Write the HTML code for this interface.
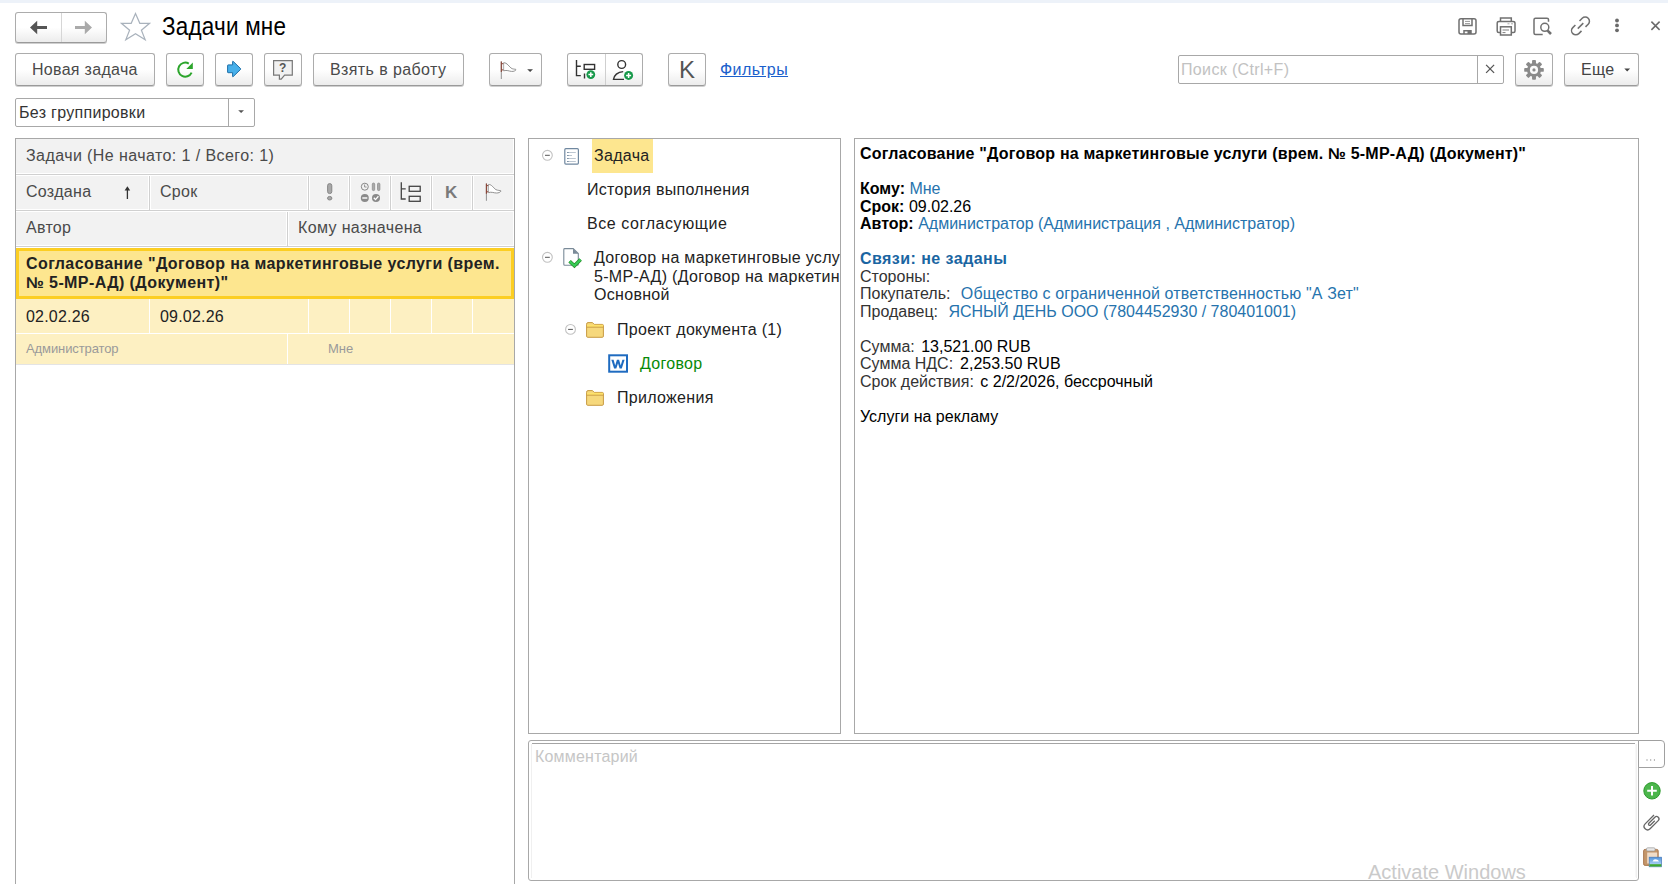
<!DOCTYPE html>
<html><head><meta charset="utf-8">
<style>
*{box-sizing:border-box;margin:0;padding:0}
html,body{width:1668px;height:884px;overflow:hidden;background:#fff;font-family:"Liberation Sans",sans-serif;font-size:16px;color:#333}
.a{position:absolute}
.t{position:absolute;white-space:nowrap;line-height:16px;letter-spacing:0.3px}
.btn{position:absolute;border:1px solid #acacac;border-bottom-color:#9a9a9a;border-radius:3px;background:linear-gradient(#fff 50%,#ececec);box-shadow:0 1px 0 #cfcfcf}
.vs{position:absolute;width:1px;background:#d2d2d2}
.hc{position:absolute;background:#f2f2f2}
.rt{position:absolute;white-space:nowrap;line-height:16px;color:#000;letter-spacing:0}
svg{position:absolute;left:0;top:0}
</style></head><body>
<div class="a" style="left:0;top:0;width:1668px;height:3px;background:#edf2f9"></div>

<!-- nav buttons -->
<div class="btn" style="left:15px;top:12px;width:92px;height:31px"></div>
<div class="vs" style="left:61px;top:13px;height:29px;background:#d6d6d6"></div>

<!-- title -->
<div class="t" style="left:162px;top:16px;font-size:22.5px;line-height:22px;color:#000;letter-spacing:0.2px;transform:scaleY(1.12);transform-origin:0 10.4px">Задачи мне</div>

<!-- toolbar row -->
<div class="btn" style="left:15px;top:53px;width:140px;height:33px"></div>
<div class="t" style="left:32px;top:62px;color:#4a4a4a">Новая задача</div>
<div class="btn" style="left:166px;top:53px;width:38px;height:33px"></div>
<div class="btn" style="left:215px;top:53px;width:38px;height:33px"></div>
<div class="btn" style="left:264px;top:53px;width:38px;height:33px"></div>
<div class="btn" style="left:313px;top:53px;width:151px;height:33px"></div>
<div class="t" style="left:330px;top:62px;color:#4a4a4a;letter-spacing:0.4px">Взять в работу</div>
<div class="btn" style="left:489px;top:53px;width:53px;height:33px"></div>
<div class="btn" style="left:567px;top:53px;width:76px;height:33px"></div>
<div class="vs" style="left:605px;top:54px;height:31px;background:#cfcfcf"></div>
<div class="btn" style="left:668px;top:53px;width:38px;height:33px"></div>
<div class="t" style="left:679px;top:58px;font-size:24px;line-height:24px;color:#555;letter-spacing:0">K</div>
<div class="t" style="left:720px;top:62px;color:#1a5fcc;text-decoration:underline;letter-spacing:0.4px">Фильтры</div>

<!-- search -->
<div class="a" style="left:1178px;top:55px;width:326px;height:29px;border:1px solid #a8a8a8;border-radius:2px;background:#fff"></div>
<div class="vs" style="left:1477px;top:56px;height:27px;background:#a8a8a8"></div>
<div class="t" style="left:1181px;top:62px;color:#c2c2c2;letter-spacing:0.35px">Поиск (Ctrl+F)</div>
<div class="btn" style="left:1515px;top:53px;width:38px;height:33px"></div>
<div class="btn" style="left:1564px;top:53px;width:75px;height:33px"></div>
<div class="t" style="left:1581px;top:62px;color:#444">Еще</div>

<!-- grouping select -->
<div class="a" style="left:15px;top:98px;width:240px;height:29px;border:1px solid #a8a8a8;border-radius:2px;background:#fff"></div>
<div class="vs" style="left:228px;top:99px;height:27px;background:#a8a8a8"></div>
<div class="t" style="left:19px;top:105px;color:#333">Без группировки</div>

<!-- left panel -->
<div class="a" style="left:15px;top:138px;width:500px;height:760px;border:1px solid #a8a8a8;background:#fff"></div>
<div class="a" style="left:16px;top:139px;width:498px;height:109px;background:#fff"></div>
<div class="hc" style="left:16px;top:139px;width:497px;height:34px"></div>
<div class="a" style="left:16px;top:174px;width:498px;height:1px;background:#d0d0d0"></div>
<div class="t" style="left:26px;top:148px;color:#4a4a4a;letter-spacing:0.42px">Задачи (Не начато: 1 / Всего: 1)</div>
<div class="hc" style="left:16px;top:176px;width:132px;height:33px"></div>
<div class="hc" style="left:151px;top:176px;width:156px;height:33px"></div>
<div class="hc" style="left:310px;top:176px;width:38px;height:33px"></div>
<div class="hc" style="left:351px;top:176px;width:38px;height:33px"></div>
<div class="hc" style="left:392px;top:176px;width:38px;height:33px"></div>
<div class="hc" style="left:433px;top:176px;width:38px;height:33px"></div>
<div class="hc" style="left:474px;top:176px;width:39px;height:33px"></div>
<div class="vs" style="left:149px;top:176px;height:34px;background:#d0d0d0"></div>
<div class="vs" style="left:308px;top:176px;height:34px;background:#d0d0d0"></div>
<div class="vs" style="left:349px;top:176px;height:34px;background:#d0d0d0"></div>
<div class="vs" style="left:390px;top:176px;height:34px;background:#d0d0d0"></div>
<div class="vs" style="left:431px;top:176px;height:34px;background:#d0d0d0"></div>
<div class="vs" style="left:472px;top:176px;height:34px;background:#d0d0d0"></div>
<div class="a" style="left:16px;top:210px;width:498px;height:1px;background:#d0d0d0"></div>
<div class="t" style="left:26px;top:184px;color:#4a4a4a">Создана</div>
<div class="t" style="left:160px;top:184px;color:#4a4a4a">Срок</div>
<div class="t" style="left:445px;top:184px;font-weight:bold;font-size:17px;line-height:17px;color:#7a7a7a;letter-spacing:0">K</div>
<div class="hc" style="left:16px;top:212px;width:270px;height:33px"></div>
<div class="hc" style="left:289px;top:212px;width:224px;height:33px"></div>
<div class="vs" style="left:287px;top:212px;height:34px;background:#d0d0d0"></div>
<div class="a" style="left:16px;top:246px;width:498px;height:1px;background:#d0d0d0"></div>
<div class="t" style="left:26px;top:220px;color:#4a4a4a">Автор</div>
<div class="t" style="left:298px;top:220px;color:#4a4a4a;letter-spacing:0.36px">Кому назначена</div>

<!-- selected row -->
<div class="a" style="left:16px;top:248px;width:498px;height:51px;background:#fde68f;border:3px solid #fcce22"></div>
<div class="t" style="left:26px;top:254px;font-weight:bold;color:#222;line-height:19px;letter-spacing:0.4px">Согласование "Договор на маркетинговые услуги (врем.<br>№ 5-МР-АД) (Документ)"</div>
<!-- dates row -->
<div class="a" style="left:16px;top:299px;width:498px;height:34px;background:#fdf0c2"></div>
<div class="vs" style="left:149px;top:299px;height:34px;background:#fff"></div>
<div class="vs" style="left:308px;top:299px;height:34px;background:#fff"></div>
<div class="vs" style="left:349px;top:299px;height:34px;background:#fff"></div>
<div class="vs" style="left:390px;top:299px;height:34px;background:#fff"></div>
<div class="vs" style="left:431px;top:299px;height:34px;background:#fff"></div>
<div class="vs" style="left:472px;top:299px;height:34px;background:#fff"></div>
<div class="t" style="left:26px;top:309px;color:#222;letter-spacing:0.2px">02.02.26</div>
<div class="t" style="left:160px;top:309px;color:#222;letter-spacing:0.2px">09.02.26</div>
<!-- author row -->
<div class="a" style="left:16px;top:333px;width:498px;height:1px;background:#fff"></div>
<div class="a" style="left:16px;top:334px;width:498px;height:30px;background:#fdf0c2"></div>
<div class="vs" style="left:287px;top:334px;height:30px;background:#fff"></div>
<div class="a" style="left:16px;top:364px;width:498px;height:1px;background:#e4e4e4"></div>
<div class="t" style="left:26px;top:342px;font-size:13px;line-height:13px;color:#9a9a9a;letter-spacing:-0.1px">Администратор</div>
<div class="t" style="left:328px;top:342px;font-size:13px;line-height:13px;color:#9a9a9a;letter-spacing:0">Мне</div>

<!-- middle panel -->
<div class="a" style="left:528px;top:138px;width:313px;height:596px;border:1px solid #a8a8a8;background:#fff;overflow:hidden">
  <div class="a" style="left:63px;top:0;width:61px;height:34px;background:#fde68f"></div>
</div>
<div class="a" style="left:529px;top:139px;width:311px;height:594px;overflow:hidden">
  <div class="t" style="left:65px;top:9px;color:#222">Задача</div>
  <div class="t" style="left:58px;top:43px;color:#222">История выполнения</div>
  <div class="t" style="left:58px;top:77px;color:#222;letter-spacing:0.58px">Все согласующие</div>
  <div class="t" style="left:65px;top:110px;color:#222;line-height:18.5px">Договор на маркетинговые услуги (врем. №<br>5-МР-АД) (Договор на маркетинговые услуги<br>Основной</div>
  <div class="t" style="left:88px;top:183px;color:#222">Проект документа (1)</div>
  <div class="t" style="left:111px;top:217px;color:#088a08">Договор</div>
  <div class="t" style="left:88px;top:251px;color:#222">Приложения</div>
</div>

<!-- right panel -->
<div class="a" style="left:854px;top:138px;width:785px;height:596px;border:1px solid #a8a8a8;background:#fff"></div>
<div class="rt" style="left:860px;top:146px;font-weight:bold;letter-spacing:0.2px">Согласование "Договор на маркетинговые услуги (врем. № 5-МР-АД) (Документ)"</div>
<div class="rt" style="left:860px;top:181px"><b>Кому:</b> <span style="color:#2673ad">Мне</span></div>
<div class="rt" style="left:860px;top:199px"><b>Срок:</b> 09.02.26</div>
<div class="rt" style="left:860px;top:216px"><b>Автор:</b> <span style="color:#2673ad">Администратор (Администрация , Администратор)</span></div>
<div class="rt" style="left:860px;top:251px;font-weight:bold;color:#1a65a2;letter-spacing:0.45px">Связи: не заданы</div>
<div class="rt" style="left:860px;top:269px;color:#333">Стороны:</div>
<div class="rt" style="left:860px;top:286px;color:#333">Покупатель:&nbsp; <span style="color:#2673ad;margin-left:1.5px;letter-spacing:0.14px">Общество с ограниченной ответственностью "А Зет"</span></div>
<div class="rt" style="left:860px;top:304px;color:#333">Продавец:&nbsp; <span style="color:#2673ad;margin-left:1.5px">ЯСНЫЙ ДЕНЬ ООО (7804452930 / 780401001)</span></div>
<div class="rt" style="left:860px;top:339px;color:#333">Сумма: <span style="color:#000;margin-left:2px">13,521.00 RUB</span></div>
<div class="rt" style="left:860px;top:356px;color:#333">Сумма НДС: <span style="color:#000;margin-left:2.5px">2,253.50 RUB</span></div>
<div class="rt" style="left:860px;top:374px;color:#333">Срок действия: <span style="color:#000;margin-left:2px">с 2/2/2026, бессрочный</span></div>
<div class="rt" style="left:860px;top:409px">Услуги на рекламу</div>

<!-- comment -->
<div class="a" style="left:528px;top:740px;width:1111px;height:141px;border:1px solid #a8a8a8;border-radius:3px 0 3px 3px;background:#fff"></div>
<div class="t" style="left:535px;top:749px;color:#c6c6c6;letter-spacing:0.2px">Комментарий</div>
<div class="a" style="left:532px;top:743px;width:1103px;height:1px;background:#a4a4a4"></div>
<div class="a" style="left:531px;top:744px;width:1px;height:134px;background:#f0f0f0"></div>
<div class="a" style="left:1636px;top:744px;width:1px;height:134px;background:#f0f0f0"></div>
<div class="a" style="left:1638px;top:740px;width:27px;height:28px;border:1px solid #a0a0a0;border-radius:0 4px 4px 0;background:#fff"></div>
<div class="t" style="left:1368px;top:862px;font-size:20px;line-height:20px;color:#cacaca;letter-spacing:0">Activate Windows</div>

<!--ICONS--><svg width="1668" height="884" viewBox="0 0 1668 884">
<!-- nav arrows -->
<path d="M30,27.5 L37.2,20.8 L37.2,26 L47,26 L47,29 L37.2,29 L37.2,34.2 Z" fill="#555"/>
<path d="M92,27.5 L84.8,20.8 L84.8,26 L75,26 L75,29 L84.8,29 L84.8,34.2 Z" fill="#aaa"/>
<!-- star -->
<path d="M135.5,13.6 L139.8,23.3 L149.6,23.3 L141.4,30.3 L145.2,39.8 L135.5,33.8 L125.8,39.8 L129.6,30.3 L121.4,23.3 L131.2,23.3 Z" fill="none" stroke="#a9b2bc" stroke-width="1.2" stroke-linejoin="miter"/>
<!-- save -->
<g fill="none" stroke="#707070" stroke-width="1.5">
<rect x="1459" y="18.8" width="17" height="15.3" rx="2"/>
<path d="M1463,19 V25.5 H1472 V19"/>
<path d="M1464,34 V30.8 H1471 V34"/>
</g>
<path d="M1465,21.4 H1470 M1465,23.6 H1470" stroke="#999" stroke-width="1"/>
<rect x="1467.5" y="31" width="3.5" height="3" fill="#707070"/>
<!-- print -->
<g fill="none" stroke="#707070" stroke-width="1.5">
<path d="M1500.5,21 V17.9 H1511.3 V21"/>
<path d="M1500.5,32.5 H1498.8 Q1497.2,32.5 1497.2,31 V23.2 Q1497.2,21.5 1499,21.5 H1513 Q1515,21.5 1515,23.2 V31 Q1515,32.5 1513.5,32.5 H1511.3"/>
<rect x="1500.5" y="26.8" width="10.8" height="8.2"/>
</g>
<path d="M1502.5,30 H1509 M1502.5,32.6 H1505.5" stroke="#808080" stroke-width="1"/>
<path d="M1507.5,23.8 H1509.5 M1511,23.8 H1513" stroke="#aaa" stroke-width="1"/>
<!-- preview -->
<g fill="none" stroke="#707070" stroke-width="1.5">
<path d="M1548.5,21.7 V19.5 Q1548.5,18.2 1547,18.2 H1535.5 Q1534,18.2 1534,19.8 V33 Q1534,34.5 1535.5,34.5 H1542.7"/>
<circle cx="1544.8" cy="27.3" r="4"/>
</g>
<path d="M1547.6,30.6 L1551,34" stroke="#707070" stroke-width="2.6"/>
<!-- link -->
<g fill="none" stroke="#707070" stroke-width="1.5" stroke-linecap="butt">
<path d="M1579.5,21 L1582.2,18.2 A4.24,4.24 0 0 1 1588.2,24.2 L1585.5,26.9"/>
<path d="M1575.4,25 L1572.8,27.6 A4.24,4.24 0 0 0 1578.8,33.6 L1581.5,30.9"/>
<path d="M1577.8,28.6 L1583.3,23.1"/>
</g>
<!-- more -->
<g fill="#6a6a6a"><circle cx="1617" cy="20.5" r="1.9"/><circle cx="1617" cy="25.4" r="1.9"/><circle cx="1617" cy="30.3" r="1.9"/></g>
<!-- close -->
<path d="M1651.4,21.6 L1659.6,29.9 M1659.6,21.6 L1651.4,29.9" stroke="#6a6a6a" stroke-width="1.5"/>

<!-- refresh -->
<path d="M191.6,72.6 A7,7 0 1 1 188.8,63.6" fill="none" stroke="#2ca52c" stroke-width="2"/>
<path d="M192.8,62.4 V68.9 H186.3 Z" fill="#2ca52c"/>
<!-- blue arrow -->
<path d="M227.6,65.4 Q227.6,64.9 228.1,64.9 H232.6 V61.6 Q232.6,60.9 233.2,61.4 L240.6,68.6 Q241,69 240.6,69.4 L233.2,76.6 Q232.6,77.1 232.6,76.4 V72.7 H228.1 Q227.6,72.7 227.6,72.2 Z" fill="#48b0ea" stroke="#1e6fa8" stroke-width="1"/>
<!-- help -->
<path d="M273.6,60.6 H292.3 V75.1 H284.6 L281.2,79.2 H279.4 V75.1 H273.6 Z" fill="#f1f1f1" stroke="#777" stroke-width="1.2"/>
<text x="282.6" y="71.6" font-family="Liberation Sans" font-size="12" font-weight="bold" fill="#555" text-anchor="middle">?</text>
<!-- flag toolbar -->
<path d="M501.3,61.5 V79" stroke="#8f8f8f" stroke-width="1"/>
<path d="M501.3,61.5 V72" stroke="#8a4436" stroke-width="1.1"/>
<path d="M503.6,62.8 C507,62.2 509.5,67.5 512,68.6 C514,69.4 516.5,69.1 516,69.8 C515,70.9 513.8,71.6 511.5,71.4 C509,71.2 507,69.8 503.6,70.8 Z" fill="#fff" stroke="#858585" stroke-width="0.9"/>
<path d="M503.3,63 V70.6" stroke="#c4c4c4" stroke-width="0.9"/>
<path d="M501.6,63.7 H503.4 M501.6,69.9 H503.4" stroke="#8a4436" stroke-width="1"/>
<path d="M527.2,69.2 H533 L530.1,72 Z" fill="#444"/>
<!-- tree add -->
<g fill="none" stroke="#333" stroke-width="1.4">
<path d="M576.5,60 V75.6 H580.8 M576.5,66.3 H580.8"/>
<rect x="584.2" y="64.5" width="10.4" height="4.8"/>
<path d="M584.5,73.5 V78.5"/>
</g>
<circle cx="590.8" cy="74.6" r="4.4" fill="#17994a"/>
<path d="M590.8,72.2 V77 M588.4,74.6 H593.2" stroke="#fff" stroke-width="1.5"/>
<!-- person add -->
<circle cx="621.7" cy="64.5" r="3.9" fill="none" stroke="#333" stroke-width="1.4"/>
<path d="M623.2,71.6 C617.5,71.8 614,75.5 613.5,79.4 H624" fill="none" stroke="#333" stroke-width="1.4"/>
<circle cx="628.6" cy="75.4" r="4.5" fill="#17994a"/>
<path d="M628.6,72.9 V77.9 M626.1,75.4 H631.1" stroke="#fff" stroke-width="1.5"/>
<!-- search x -->
<path d="M1486.1,64.9 L1494.1,72.9 M1494.1,64.9 L1486.1,72.9" stroke="#555" stroke-width="1.3"/>
<!-- gear -->
<g transform="translate(1534,69.9)" fill="#8a8a8a">
<circle r="7"/>
<g transform="rotate(0)"><rect x="-1.95" y="-9.8" width="3.9" height="5.5" rx="0.9"/></g>
<g transform="rotate(45)"><rect x="-1.95" y="-9.8" width="3.9" height="5.5" rx="0.9"/></g>
<g transform="rotate(90)"><rect x="-1.95" y="-9.8" width="3.9" height="5.5" rx="0.9"/></g>
<g transform="rotate(135)"><rect x="-1.95" y="-9.8" width="3.9" height="5.5" rx="0.9"/></g>
<g transform="rotate(180)"><rect x="-1.95" y="-9.8" width="3.9" height="5.5" rx="0.9"/></g>
<g transform="rotate(225)"><rect x="-1.95" y="-9.8" width="3.9" height="5.5" rx="0.9"/></g>
<g transform="rotate(270)"><rect x="-1.95" y="-9.8" width="3.9" height="5.5" rx="0.9"/></g>
<g transform="rotate(315)"><rect x="-1.95" y="-9.8" width="3.9" height="5.5" rx="0.9"/></g>
<circle r="4.1" fill="#fafafa"/>
<circle r="1.6"/>
</g>
<!-- eshe dropdown -->
<path d="M1624.3,68.6 H1630.1 L1627.2,71.4 Z" fill="#444"/>
<!-- grouping dropdown -->
<path d="M238.2,110.3 H244 L241.1,113.1 Z" fill="#555"/>

<!-- header icons -->
<path d="M127.4,188 V199" stroke="#333" stroke-width="1.3"/>
<path d="M124.6,190.6 L127.4,186.2 L130.2,190.6 Z" fill="#333"/>
<rect x="327.6" y="183.6" width="4.2" height="10" rx="2" fill="#a8a8a8" stroke="#808080" stroke-width="0.9"/>
<ellipse cx="329.7" cy="198.2" rx="2.2" ry="1.8" fill="#a8a8a8" stroke="#808080" stroke-width="0.9"/>
<circle cx="364.8" cy="186.7" r="3.5" fill="none" stroke="#888" stroke-width="1"/>
<path d="M364.6,184.5 V187 H366.6" fill="none" stroke="#888" stroke-width="0.9"/>
<rect x="372.3" y="183" width="2.4" height="7.6" rx="1.2" fill="#aaa" stroke="#888" stroke-width="0.7"/>
<rect x="377.5" y="183" width="2.4" height="7.6" rx="1.2" fill="#aaa" stroke="#888" stroke-width="0.7"/>
<circle cx="364.8" cy="198" r="4" fill="#8a8a8a"/>
<path d="M362.3,198 H367.3" stroke="#fff" stroke-width="1.4"/>
<circle cx="376" cy="198" r="4" fill="#8a8a8a"/>
<path d="M373.8,197.8 L375.5,199.6 L378.4,196.3" fill="none" stroke="#fff" stroke-width="1.3"/>
<g fill="none" stroke="#444" stroke-width="1.3">
<path d="M401.3,182.2 V199 H405.7 M401.3,188.8 H405.7"/>
<rect x="409.2" y="186.3" width="11" height="5"/>
<rect x="409.2" y="196.3" width="11" height="5"/>
</g>
<!-- header flag -->
<path d="M486.4,183.6 V200.8" stroke="#8f8f8f" stroke-width="1"/>
<path d="M486.4,183.6 V193.8" stroke="#8a4436" stroke-width="1.1"/>
<path d="M488.4,184.6 C491.5,184 493.5,188 495.8,189.6 C497.8,190.7 501.5,190.3 501,191.1 C500,192.4 498.6,193 496.5,193 C494,193 491.5,191.6 488.4,192.6 Z" fill="#fff" stroke="#858585" stroke-width="0.9"/>
<path d="M488.2,184.8 V192.4" stroke="#c4c4c4" stroke-width="0.9"/>
<path d="M486.7,185.6 H488.3 M486.7,191.8 H488.3" stroke="#8a4436" stroke-width="1"/>

<!-- tree panel -->
<circle cx="547.4" cy="155.3" r="4.9" fill="none" stroke="#c2c2c2" stroke-width="1.1"/>
<path d="M545,155.3 H549.8" stroke="#555" stroke-width="1"/>
<rect x="564.8" y="148.7" width="13.6" height="15.4" rx="1" fill="#fff" stroke="#7088a0" stroke-width="1.2"/>
<path d="M567.5,152.5 H575.8 M567.5,155.5 H572 M567.5,158.5 H575.8 M567.5,161.5 H575.8" stroke="#b4c0cc" stroke-width="0.9"/>
<path d="M567.2,152.5 H568.5 M567.2,155.5 H568.5 M567.2,158.5 H568.5 M567.2,161.5 H568.5" stroke="#60788e" stroke-width="0.9"/>

<circle cx="547.4" cy="257.3" r="4.9" fill="none" stroke="#c2c2c2" stroke-width="1.1"/>
<path d="M545,257.3 H549.8" stroke="#555" stroke-width="1"/>
<path d="M563.8,249.5 Q563.8,248.6 564.8,248.6 H573.2 L578.3,253.6 V264.3 Q578.3,265.3 577.3,265.3 H564.8 Q563.8,265.3 563.8,264.3 Z" fill="#fff" stroke="#7a8a98" stroke-width="1.1"/>
<path d="M573,248.6 L578.3,253.8 H573 Z" fill="#7a8a98"/>
<path d="M569.6,261.3 L574.4,265.8 L580.6,259.4" fill="none" stroke="#2b8a2b" stroke-width="3.6" stroke-linejoin="miter"/>
<path d="M569.6,261.3 L574.4,265.8 L580.6,259.4" fill="none" stroke="#36cc56" stroke-width="2.2" stroke-linejoin="miter"/>

<circle cx="570.5" cy="329.4" r="4.9" fill="none" stroke="#c2c2c2" stroke-width="1.1"/>
<path d="M568.1,329.4 H572.9" stroke="#555" stroke-width="1"/>
<g>
<path d="M586.6,324.2 Q586.6,322.6 588,322.6 H592.5 L594.2,324.4 H602.3 Q603.4,324.4 603.4,325.5 V336.2 Q603.4,337.3 602.3,337.3 H587.7 Q586.6,337.3 586.6,336.2 Z" fill="#f6d87c" stroke="#c79a42" stroke-width="1"/>
<path d="M587.1,324.8 H603 V327 H587.1 Z" fill="#fee16a"/>
<path d="M586.8,327.2 H603.2" stroke="#c79a42" stroke-width="0.9"/>
</g>
<g transform="translate(0,68)">
<path d="M586.6,324.2 Q586.6,322.6 588,322.6 H592.5 L594.2,324.4 H602.3 Q603.4,324.4 603.4,325.5 V336.2 Q603.4,337.3 602.3,337.3 H587.7 Q586.6,337.3 586.6,336.2 Z" fill="#f6d87c" stroke="#c79a42" stroke-width="1"/>
<path d="M587.1,324.8 H603 V327 H587.1 Z" fill="#fee16a"/>
<path d="M586.8,327.2 H603.2" stroke="#c79a42" stroke-width="0.9"/>
</g>
<rect x="609.2" y="355.3" width="17.8" height="16.4" fill="#fff" stroke="#1f6bc0" stroke-width="2"/>
<path d="M611.3,359.8 H613.6 L615.2,365.6 L616.9,359.8 H619.1 L620.7,365.6 L622.4,359.8 H624.6 L621.8,368.6 H619.6 L618,363.2 L616.3,368.6 H614.1 Z" fill="#1f6bc0"/>

<!-- comment side icons -->
<path d="M1646.5,760 h1 M1650.2,760 h1 M1653.9,760 h1" stroke="#666" stroke-width="1.2"/>
<path d="M1636,744 V877" stroke="#f0f0f0" stroke-width="1"/>
<circle cx="1652" cy="790.8" r="8.2" fill="#4cb64c" stroke="#2d9a2d" stroke-width="1"/>
<path d="M1652,786 V795.6 M1647.2,790.8 H1656.8" stroke="#fff" stroke-width="2"/>
<path d="M1654.00,815.00 L1645.16,823.84 A3.5,3.5 0 0 0 1650.11,828.79 L1658.24,820.66 A2.4,2.4 0 0 0 1654.85,817.26 L1648.84,823.27 A1.2,1.2 0 0 0 1650.54,824.97 L1654.78,820.73" fill="none" stroke="#666" stroke-width="1.3"/>
<rect x="1643.6" y="849.4" width="14.6" height="16" rx="1.5" fill="#c4966a" stroke="#a57248" stroke-width="0.9"/>
<rect x="1646.5" y="847.8" width="8.6" height="3.2" rx="1.2" fill="#e8e8e8" stroke="#999" stroke-width="0.7"/>
<rect x="1647.2" y="852.5" width="10" height="11" fill="#f0dcc8"/>
<rect x="1649.2" y="857.2" width="12.4" height="9.6" fill="url(#sky)" stroke="#4a7ab8" stroke-width="0.7"/>
<rect x="1649.5" y="864.2" width="11.8" height="2.3" fill="#3fa830"/>
<path d="M1652.5,861.5 Q1654,858.8 1656,859.5 Q1658,859.2 1659,861.5 Z" fill="#fff"/>
<defs><linearGradient id="sky" x1="0" y1="0" x2="0" y2="1"><stop offset="0" stop-color="#4f93de"/><stop offset="1" stop-color="#c8e4fa"/></linearGradient></defs>
</svg>
<!--/ICONS-->
</body></html>
